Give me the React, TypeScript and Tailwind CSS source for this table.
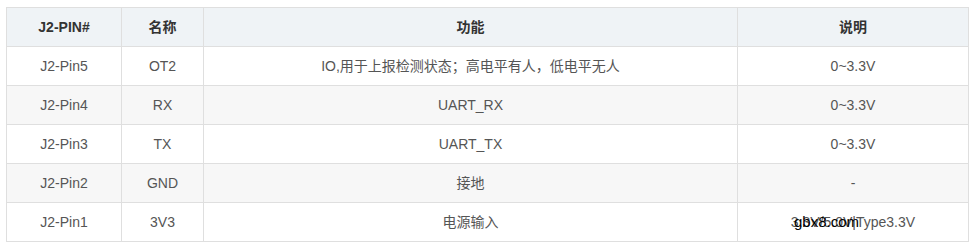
const rows = [
  { pin: 'J2-Pin5', name: 'OT2', func: 'IO,用于上报检测状态；高电平有人，低电平无人', desc: '0~3.3V' },
  { pin: 'J2-Pin4', name: 'RX', func: 'UART_RX', desc: '0~3.3V' },
  { pin: 'J2-Pin3', name: 'TX', func: 'UART_TX', desc: '0~3.3V' },
  { pin: 'J2-Pin2', name: 'GND', func: '接地', desc: '-' },
  { pin: 'J2-Pin1', name: '3V3', func: '电源输入', desc: '3.3V/5.0V|Type3.3V' }
]

export default function App() {
  return (
    <div className="h-[252px] w-[973px] bg-white pl-[6px] pt-[7px] font-['Liberation_Sans','Noto_Sans_CJK_SC',sans-serif] text-[14px]">
      <table className="w-[962px] table-fixed border-collapse text-center">
        <colgroup>
          <col className="w-[115px]" />
          <col className="w-[82px]" />
          <col className="w-[534px]" />
          <col className="w-[231px]" />
        </colgroup>
        <thead>
          <tr className="h-[39px] bg-[#eff3f6] font-bold text-[#333]">
            <th className="border border-[#dfdfdf]">J2-PIN#</th>
            <th className="border border-[#dfdfdf]">名称</th>
            <th className="border border-[#dfdfdf]">功能</th>
            <th className="border border-[#dfdfdf]">说明</th>
          </tr>
        </thead>
        <tbody className="text-[#555]">
          {rows.map((r, i) => (
            <tr key={r.pin} className={i % 2 === 1 ? 'h-[39px] bg-[#f7f7f7]' : 'h-[39px] bg-white'}>
              <td className="border border-[#dfdfdf]">{r.pin}</td>
              <td className="border border-[#dfdfdf]">{r.name}</td>
              <td className="border border-[#dfdfdf]">{r.func}</td>
              <td className="relative border border-[#dfdfdf]">
                {r.desc}
                {i === 4 && (
                  <span className="absolute left-[56px] top-[9px] text-[15px] leading-[20px] text-black">gbx8.com</span>
                )}
              </td>
            </tr>
          ))}
        </tbody>
      </table>
    </div>
  )
}
